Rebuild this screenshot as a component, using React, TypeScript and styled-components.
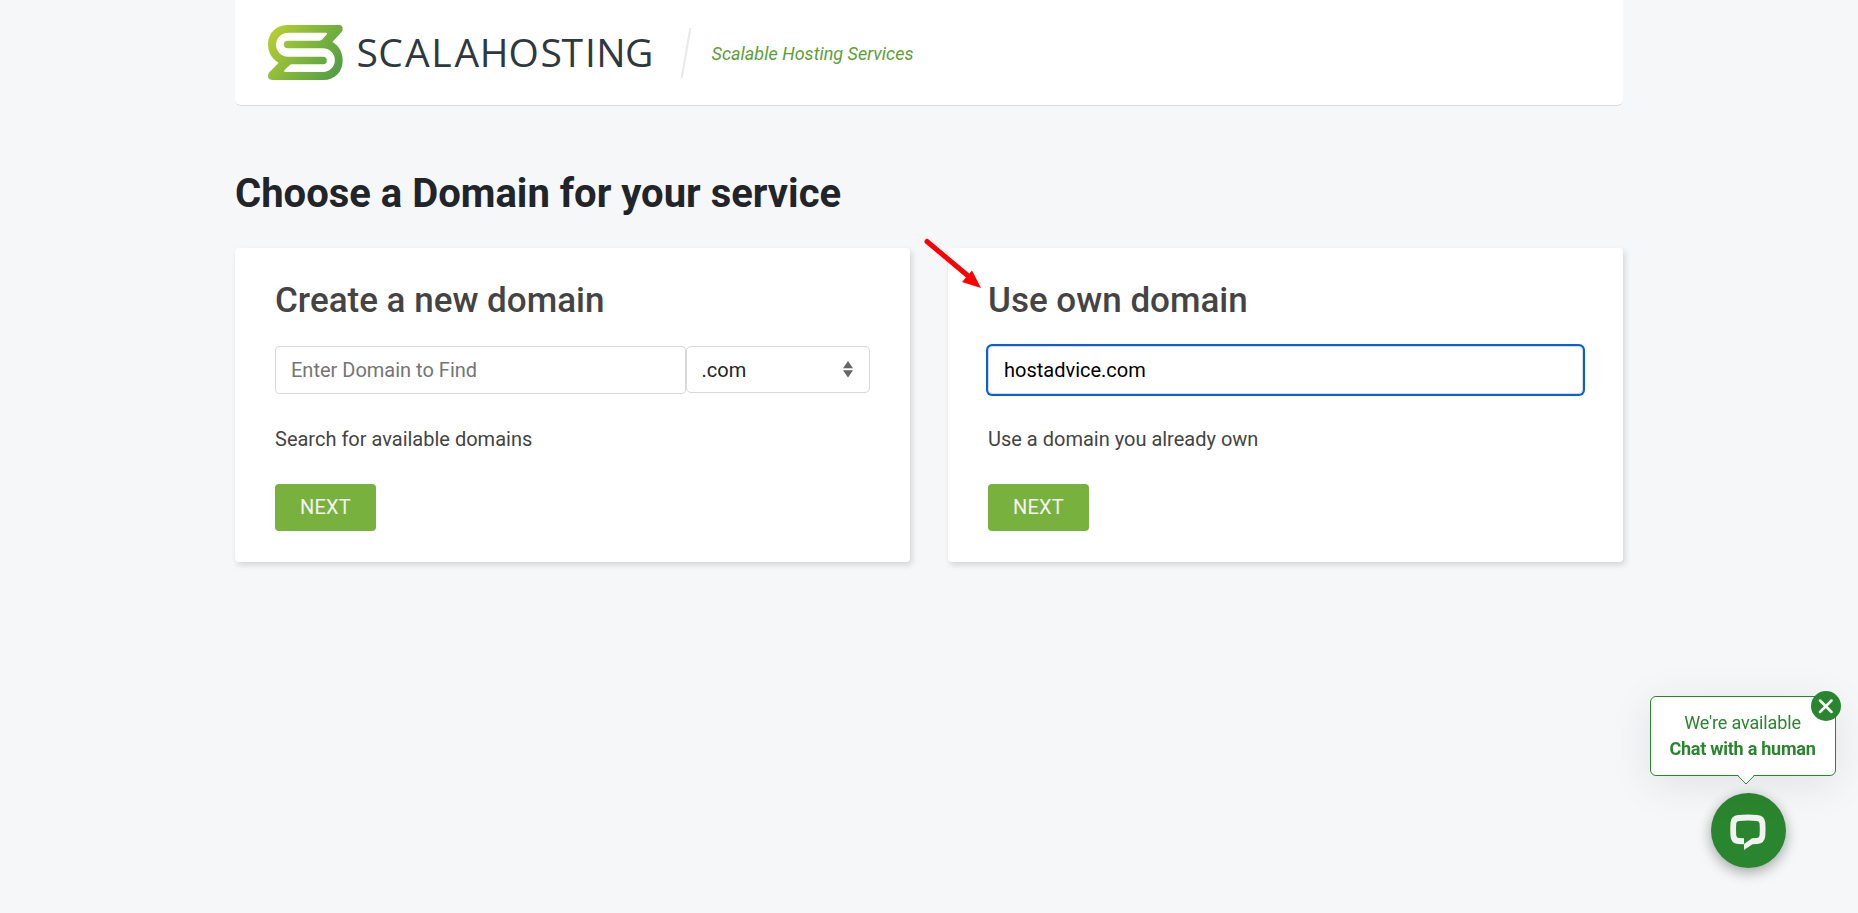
import React, { useState } from "react";
import styled, { createGlobalStyle, css } from "styled-components";

const GlobalStyle = createGlobalStyle`
  *, *::before, *::after { box-sizing: border-box; }
  body {
    margin: 0;
    background: #f6f7f9;
    color: #212529;
    font-family: Roboto, "Liberation Sans", sans-serif;
    font-size: 20px;
    line-height: 1.5;
  }
`;

const Page = styled.main`
  width: 1388px;
  min-height: 913px;
  margin: 0 auto;
`;

const Header = styled.header`
  display: flex;
  align-items: flex-start;
  height: 106px;
  padding: 25px 33px 0;
  background: #fff;
  border-bottom: 1px solid #dadada;
  border-radius: 0 0 6px 6px;
`;

const Mark = styled.svg`
  flex: none;
  width: 75px;
  height: 55px;
`;

const Wordmark = styled.svg`
  flex: none;
  width: 300px;
  height: 55px;
  margin-left: 12px;
  font-family: "Open Sans", "Noto Sans", sans-serif;
  font-size: 39px;
`;

const Slash = styled.svg`
  flex: none;
  width: 12px;
  height: 52px;
  margin: 2px 0 0 25px;
`;

const Tagline = styled.span`
  margin: 15px 0 0 19.5px;
  color: #5b9f37;
  font-size: 18px;
  font-style: italic;
  line-height: 27px;
  letter-spacing: 0.02px;
  white-space: nowrap;
`;

const Title = styled.h1`
  margin: 64px 0 30px;
  font-size: 40px;
  font-weight: 700;
  line-height: 48px;
`;

const Cards = styled.div`
  display: grid;
  grid-template-columns: 1fr 1fr;
  gap: 38px;
`;

const Card = styled.section`
  position: relative;
  height: 314px;
  padding: 32px 40px 0;
  background: #fff;
  border-radius: 4px;
  box-shadow: 2px 3px 6px rgba(0, 0, 0, 0.14);
`;

const CardTitle = styled.h2`
  margin: 0 0 24px;
  color: #444;
  font-size: 35px;
  font-weight: 500;
  line-height: 42px;
`;

const Fields = styled.div`
  display: flex;
  align-items: flex-start;
  height: 48px;
`;

const DomainInput = styled.input<{ $active?: boolean }>`
  flex: 1;
  min-width: 0;
  height: 48px;
  padding: 0 15px;
  border: 1px solid #d9d9d9;
  border-radius: 4px;
  background: #fff;
  color: #000;
  font: 400 20px/30px Roboto, sans-serif;
  outline: none;
  &::placeholder { color: #757575; opacity: 1; }
  ${(p) => p.$active && css`box-shadow: 0 0 0 2px #0560e0;`}
`;

const TldSelect = styled.button`
  display: flex;
  align-items: center;
  justify-content: space-between;
  width: 184px;
  height: 47px;
  padding: 0 16px 0 14.5px;
  border: 1px solid #d9d9d9;
  border-radius: 5px;
  background: #fff;
  color: #212529;
  font: 400 20px/30px Roboto, sans-serif;
`;

const Description = styled.p`
  margin: 30px 0;
  color: #444;
  line-height: 30px;
`;

const NextButton = styled.button`
  display: block;
  width: 101px;
  height: 47px;
  padding: 0 0 2px;
  border: 0;
  border-radius: 4px;
  background: #79b13f;
  color: #f4f4f4;
  font: 400 20px/30px Roboto, sans-serif;
  letter-spacing: 0.2px;
`;

const Pointer = styled.svg`
  position: absolute;
  left: -24px;
  top: -10px;
  width: 60px;
  height: 54px;
`;

const ChatWidget = styled.aside`
  position: fixed;
  right: 22px;
  bottom: 45px;
  display: flex;
  flex-direction: column;
  align-items: center;
  width: 186px;
`;

const Bubble = styled.div`
  position: relative;
  width: 186px;
  height: 80px;
  margin-bottom: 17px;
  padding: 13px 1px 0 0;
  border: 1px solid #2a862e;
  border-radius: 6px;
  background: #fff;
  box-shadow: 0 8px 44px rgba(0, 0, 0, 0.09);
  color: #2a862e;
  font-size: 18px;
  line-height: 26px;
  text-align: center;
  white-space: nowrap;
`;

const Invite = styled.div<{ $bold?: boolean }>`
  font-weight: ${(p) => (p.$bold ? 700 : 400)};
  letter-spacing: ${(p) => (p.$bold ? "-0.25px" : "-0.15px")};
`;

const Tail = styled.svg`
  position: absolute;
  left: 85px;
  bottom: -11px;
  width: 20px;
  height: 12px;
`;

const CloseButton = styled.button`
  position: absolute;
  right: -6px;
  top: -6px;
  width: 30px;
  height: 30px;
  padding: 0;
  border: 0;
  border-radius: 50%;
  background: #2a862e;
  svg { display: block; }
`;

const ChatButton = styled.button`
  width: 75px;
  height: 75px;
  margin-left: 11px;
  padding: 0;
  border: 0;
  border-radius: 50%;
  background: #2a862e;
  box-shadow: 0 4px 14px rgba(0, 0, 0, 0.35);
  svg { display: block; }
`;

function Brand() {
  return (
    <>
      <Mark viewBox="130 75 225 165" preserveAspectRatio="none" aria-hidden="true">
        <defs>
          <linearGradient id="leaf" gradientUnits="userSpaceOnUse" x1="142" y1="85" x2="340" y2="225">
            <stop offset="0" stopColor="#b8cf33" />
            <stop offset="0.5" stopColor="#81b63b" />
            <stop offset="1" stopColor="#529d46" />
          </linearGradient>
        </defs>
        <path fill="url(#leaf)" d="M187 75H344Q354 76 354 87Q354 92 350 97L323 126C343 137 354 157 354 182C354 215 330 240 297 240H142Q130 239 130 228Q130 222 134 217L162 188C141 177 130 156 130 132C130 100 155 75 187 75Z" />
        <path fill="#fff" d="M190 98H305Q310 99 307 103L293 118Q289 122 284 122H189A11.5 11.5 0 0 0 189 145H295A35.5 35.5 0 0 1 295 216H181Q176 215 179 211L193 197Q197 193 202 193H295A11.5 11.5 0 0 0 295 170H190A36 36 0 0 1 190 98Z" />
      </Mark>
      <Wordmark viewBox="0 0 300 55">
        <text x="1.4 23.2 50 76.2 99.5 124.7 153.6 185.4 206.5 229.9 241.2 270.1" y="41.9" fill="#2f383d">SCALAHOSTING</text>
      </Wordmark>
      <Slash viewBox="0 0 12 52" aria-hidden="true">
        <path d="M10.4 1L1.7 51" stroke="#e9e9e9" strokeWidth="2" />
      </Slash>
      <Tagline>Scalable Hosting Services</Tagline>
    </>
  );
}

export default function App() {
  const [search, setSearch] = useState("");
  const [owned, setOwned] = useState("hostadvice.com");
  return (
    <>
      <GlobalStyle />
      <Page>
        <Header><Brand /></Header>
        <Title>Choose a Domain for your service</Title>
        <Cards>
          <Card>
            <CardTitle>Create a new domain</CardTitle>
            <Fields>
              <DomainInput placeholder="Enter Domain to Find" value={search} onChange={(e) => setSearch(e.target.value)} />
              <TldSelect>
                .com
                <svg width="10" height="17" viewBox="0 0 10 17">
                  <path fill="#666" d="M5 0L10 7.2H0ZM0 9.3H10L5 16.5Z" />
                </svg>
              </TldSelect>
            </Fields>
            <Description>Search for available domains</Description>
            <NextButton>NEXT</NextButton>
          </Card>
          <Card>
            <Pointer viewBox="0 0 60 54" aria-hidden="true">
              <path d="M3 3.5L43 37" stroke="#f00" strokeWidth="5" strokeLinecap="round" />
              <path d="M48 32.5L57 50L38 44Z" fill="#f00" />
            </Pointer>
            <CardTitle>Use own domain</CardTitle>
            <Fields>
              <DomainInput $active value={owned} onChange={(e) => setOwned(e.target.value)} />
            </Fields>
            <Description>Use a domain you already own</Description>
            <NextButton>NEXT</NextButton>
          </Card>
        </Cards>
      </Page>
      <ChatWidget>
        <Bubble>
          <Invite>We're available</Invite>
          <Invite $bold>Chat with a human</Invite>
          <Tail viewBox="0 0 20 12">
            <path d="M1 0L10 9.8L19 0" fill="#fff" />
            <path d="M1.2 1L10 10L18.8 1" fill="none" stroke="#2a862e" />
          </Tail>
          <CloseButton aria-label="Close">
            <svg width="30" height="30" viewBox="0 0 30 30">
              <path d="M9 9.5L20.5 21M20.5 9.5L9 21" stroke="#fff" strokeWidth="2.5" strokeLinecap="round" />
            </svg>
          </CloseButton>
        </Bubble>
        <ChatButton aria-label="Open chat">
          <svg width="75" height="75" viewBox="0 0 75 75">
            <path fill="#f2f2f2" fillRule="evenodd" d="M27 21.9Q37 21.3 46.5 21.9Q53.7 22.4 54.3 29.5Q54.8 36 54.3 43Q53.7 50.3 46.5 51L41.5 51.2L33 57V51.2L26.8 51Q20 50.3 19.5 43Q19 36 19.5 29.5Q20 22.4 27 21.9ZM28 27.9Q37 27.3 46 27.9Q48.3 28.2 48.6 30.5Q49 36 48.6 42.3Q48.3 44.8 46 45L41 45.2L33 51.1V45.2L27.8 45Q25.5 44.8 25.2 42.3Q24.8 36 25.2 30.5Q25.5 28.2 28 27.9Z" />
          </svg>
        </ChatButton>
      </ChatWidget>
    </>
  );
}
